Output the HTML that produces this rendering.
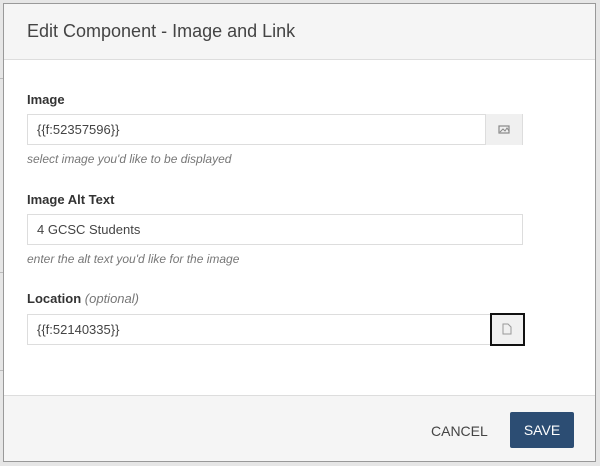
<!DOCTYPE html>
<html><head><style>
html,body{margin:0;padding:0;width:600px;height:466px;overflow:hidden;background:#e6e6e6;font-family:"Liberation Sans",Arial,sans-serif;}
.m{position:absolute;left:3px;top:3px;width:593px;height:459px;background:#fff;border:1px solid #999;box-sizing:border-box;}
.h{position:absolute;left:0;top:0;right:0;height:55px;background:#f5f5f5;border-bottom:1px solid #ddd;}
.h span{position:absolute;left:23px;top:17px;font-size:18px;color:#444;}
.lbl{position:absolute;left:23px;font-size:13px;font-weight:bold;color:#333;}
.lbl i{font-weight:normal;color:#777;}
.in{position:absolute;left:23px;width:496px;height:31px;border:1px solid #ddd;box-sizing:border-box;font-size:13px;color:#444;padding:7px 0 0 9px;}
.btn{position:absolute;right:0;top:-1px;width:36px;height:31px;background:#f0f0f0;border-left:1px solid #ddd;}
.hint{position:absolute;left:23px;font-size:12px;font-style:italic;color:#777;}
.f{position:absolute;left:0;right:0;bottom:0;height:65px;background:#f5f5f5;border-top:1px solid #ddd;}
.c{position:absolute;left:427px;top:27px;font-size:14px;color:#444;}
.s{position:absolute;left:506px;top:16px;width:64px;height:36px;background:#2c4d73;border-radius:2px;color:#fff;font-size:14px;text-align:center;line-height:36px;}
</style></head><body>
<div style="position:absolute;left:0;top:78px;width:3px;height:1px;background:#bbb"></div>
<div style="position:absolute;left:0;top:272px;width:3px;height:1px;background:#bbb"></div>
<div style="position:absolute;left:0;top:370px;width:3px;height:1px;background:#bbb"></div>
<div class="m">
<div class="h"><span>Edit Component - Image and Link</span></div>
<div class="lbl" style="top:88px">Image</div>
<div class="in" style="top:110px">{{f:52357596}}<div class="btn"><svg width="36" height="31"><rect x="13" y="12" width="10" height="7" fill="none" stroke="#888" stroke-width="1.2"/><path d="M14 18l3-3 2 2 2-3 2 3" fill="none" stroke="#888"/></svg></div></div>
<div class="hint" style="top:148px">select image you'd like to be displayed</div>
<div class="lbl" style="top:188px">Image Alt Text</div>
<div class="in" style="top:210px">4 GCSC Students</div>
<div class="hint" style="top:248px">enter the alt text you'd like for the image</div>
<div class="lbl" style="top:287px">Location <i>(optional)</i></div>
<div class="in" style="top:310px">{{f:52140335}}<div class="btn" style="border:2px solid #111;top:-2px;right:-3px;width:35px;height:33px;box-sizing:border-box"><svg width="31" height="29"><path d="M11 9h5l3 3v7h-8z" fill="none" stroke="#999"/></svg></div></div>
<div class="f"><div class="c">CANCEL</div><div class="s">SAVE</div></div>
</div>
</body></html>
